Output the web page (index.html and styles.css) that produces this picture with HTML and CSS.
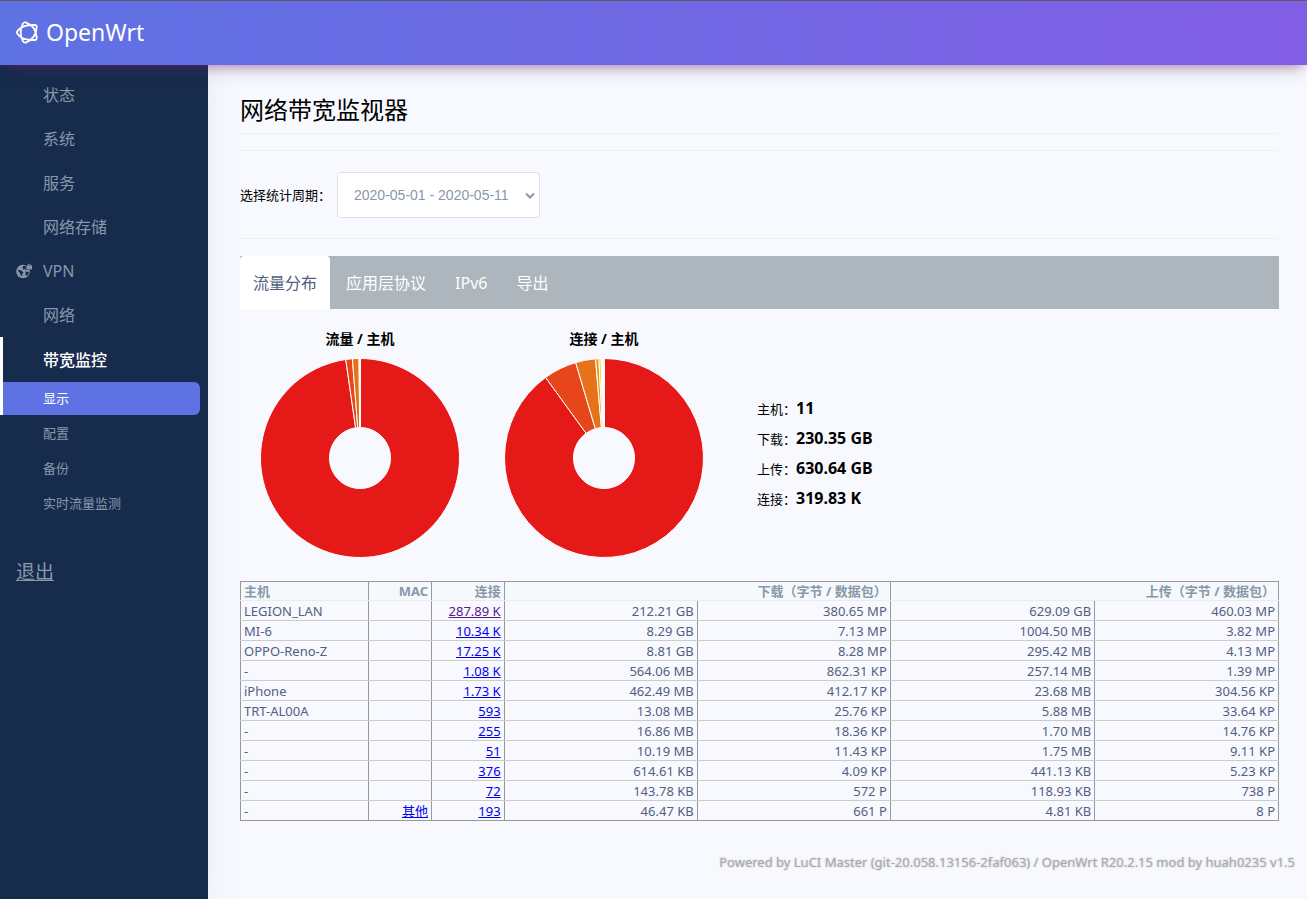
FILE: index.html
```html
<!DOCTYPE html>
<html lang="zh-CN">
<head>
<meta charset="utf-8">
<meta name="viewport" content="width=device-width, initial-scale=1">
<title>OpenWrt - 网络带宽监视器</title>
<link rel="stylesheet" href="styles.css">
</head>
<body>
<header class="topbar">
  <a class="brand" href="#">
    <svg class="brand-logo" viewBox="0 0 24 24" aria-hidden="true">
      <path d="M1.400 10.800Q6.500 3.500 19.500 4.200Q21.800 4.400 21.600 6.600Q20.800 18.400 10.200 22.500Q8.200 23 7.200 21.200Q2.500 12 7.200 2.800Q8.200 1 10.200 1.500Q20.800 5.600 21.600 17.400Q21.800 19.600 19.500 19.800Q6.500 20.500 1.400 13.200Q0.600 12 1.400 10.800Z" fill="none" stroke="#fff" stroke-width="1.900" stroke-linejoin="round"/>
    </svg>
    <span>OpenWrt</span>
  </a>
</header>
<div class="layout">
  <nav class="sidebar">
    <ul class="menu">
      <li><a href="#">状态</a></li>
      <li><a href="#">系统</a></li>
      <li><a href="#">服务</a></li>
      <li><a href="#">网络存储</a></li>
      <li><a class="has-icon" href="#"><svg class="menu-icon" viewBox="0 0 16 16" aria-hidden="true"><circle cx="7" cy="8.500" r="6.800" fill="#8898aa"/><path d="M2.500 6.500L6 8L7.500 9.500L6 11.500L6.300 13.500L4.500 12L4 10L2 8ZM7 3H9.500V6L7.500 6.500L6.500 5ZM9.500 8.500L13 9L12 12L10 13L9.500 11Z" fill="#172b4d"/><path d="M9.500 0H16V7H9.500Z" fill="#172b4d"/><path d="M10.500 2.500H16V6.500H10.500Z" fill="#8898aa"/><path d="M11.800 3V2Q13.200 0 14.700 2V3" fill="none" stroke="#8898aa"/></svg>VPN</a></li>
      <li><a href="#">网络</a></li>
      <li><a class="active" href="#">带宽监控</a>
        <ul class="submenu">
          <li><a class="current" href="#">显示</a></li>
          <li><a href="#">配置</a></li>
          <li><a href="#">备份</a></li>
          <li><a href="#">实时流量监测</a></li>
        </ul>
      </li>
    </ul>
    <a class="logout" href="#">退出</a>
  </nav>
  <main class="main">
    <h2 class="title">网络带宽监视器</h2>
    <form class="period">
      <label for="period">选择统计周期：</label>
      <span class="select-wrap">
        <select id="period"><option>2020-05-01 - 2020-05-11</option></select>
        <svg class="chevron" viewBox="0 0 10 8" aria-hidden="true"><path d="M1 1.500L5 5.500L9 1.500" fill="none" stroke="#8898aa" stroke-width="2"/></svg>
      </span>
    </form>
    <div class="tabs" role="tablist">
      <button class="tab selected" type="button" role="tab" aria-selected="true">流量分布</button>
      <button class="tab" type="button" role="tab">应用层协议</button>
      <button class="tab" type="button" role="tab">IPv6</button>
      <button class="tab" type="button" role="tab">导出</button>
    </div>
    <section class="charts">
      <figure class="chart">
        <figcaption>流量 / 主机</figcaption>
        <svg class="pie" viewBox="0 0 200 200" data-values="841.3,9.27,9.1,0.8,0.48,0.018,0.018,0.012"></svg>
      </figure>
      <figure class="chart">
        <figcaption>连接 / 主机</figcaption>
        <svg class="pie" viewBox="0 0 200 200" data-values="287.89,17.25,10.34,1.73,1.08,0.593,0.376,0.255,0.193,0.072,0.051"></svg>
      </figure>
      <ul class="totals">
        <li>主机：<strong>11</strong></li>
        <li>下载：<strong>230.35 GB</strong></li>
        <li>上传：<strong>630.64 GB</strong></li>
        <li>连接：<strong>319.83 K</strong></li>
      </ul>
    </section>
    <table class="hosts">
      <colgroup><col class="c-host"><col class="c-mac"><col class="c-conn"><col class="c-down"><col class="c-down"><col class="c-up"><col class="c-up-pkts"></colgroup>
      <thead>
        <tr><th>主机</th><th>MAC</th><th>连接</th><th colspan="2">下载（字节 / 数据包）</th><th colspan="2">上传（字节 / 数据包）</th></tr>
      </thead>
      <tbody>
        <tr><td>LEGION_LAN</td><td></td><td><a class="visited" href="#">287.89 K</a></td><td>212.21 GB</td><td>380.65 MP</td><td>629.09 GB</td><td>460.03 MP</td></tr>
        <tr><td>MI-6</td><td></td><td><a href="#">10.34 K</a></td><td>8.29 GB</td><td>7.13 MP</td><td>1004.50 MB</td><td>3.82 MP</td></tr>
        <tr><td>OPPO-Reno-Z</td><td></td><td><a href="#">17.25 K</a></td><td>8.81 GB</td><td>8.28 MP</td><td>295.42 MB</td><td>4.13 MP</td></tr>
        <tr><td>-</td><td></td><td><a href="#">1.08 K</a></td><td>564.06 MB</td><td>862.31 KP</td><td>257.14 MB</td><td>1.39 MP</td></tr>
        <tr><td>iPhone</td><td></td><td><a href="#">1.73 K</a></td><td>462.49 MB</td><td>412.17 KP</td><td>23.68 MB</td><td>304.56 KP</td></tr>
        <tr><td>TRT-AL00A</td><td></td><td><a href="#">593</a></td><td>13.08 MB</td><td>25.76 KP</td><td>5.88 MB</td><td>33.64 KP</td></tr>
        <tr><td>-</td><td></td><td><a href="#">255</a></td><td>16.86 MB</td><td>18.36 KP</td><td>1.70 MB</td><td>14.76 KP</td></tr>
        <tr><td>-</td><td></td><td><a href="#">51</a></td><td>10.19 MB</td><td>11.43 KP</td><td>1.75 MB</td><td>9.11 KP</td></tr>
        <tr><td>-</td><td></td><td><a href="#">376</a></td><td>614.61 KB</td><td>4.09 KP</td><td>441.13 KB</td><td>5.23 KP</td></tr>
        <tr><td>-</td><td></td><td><a href="#">72</a></td><td>143.78 KB</td><td>572 P</td><td>118.93 KB</td><td>738 P</td></tr>
        <tr><td>-</td><td><a href="#">其他</a></td><td><a href="#">193</a></td><td>46.47 KB</td><td>661 P</td><td>4.81 KB</td><td>8 P</td></tr>
      </tbody>
    </table>
    <footer class="footer">Powered by LuCI Master (git-20.058.13156-2faf063) / OpenWrt R20.2.15 mod by huah0235 v1.5</footer>
  </main>
</div>
<script src="pie.js"></script>
</body>
</html>
```
FILE: styles.css
```css
* { box-sizing: border-box; }

body {
  display: flex;
  flex-direction: column;
  min-height: 100vh;
  margin: 0;
  background: #f8f9fe;
  color: #000;
  font-family: "Noto Sans", "Noto Sans CJK SC", sans-serif;
  font-size: 13px;
  line-height: 20px;
}

ul { margin: 0; padding: 0; list-style: none; }

.topbar {
  position: relative;
  z-index: 2;
  display: flex;
  align-items: center;
  height: 65px;
  padding: 0 16px 2px;
  border-top: 1px solid #5c5a66;
  background: linear-gradient(87deg, #5e72e4 0, #825ee4 100%) border-box;
  background-clip: padding-box;
  box-shadow: 0 5px 10px -4px rgba(140, 20, 120, 0.4), 0 8px 20px -6px rgba(60, 60, 90, 0.3);
}

.brand {
  display: flex;
  align-items: center;
  gap: 8px;
  color: #fff;
  font-size: 23px;
  line-height: 32px;
  text-decoration: none;
}

.brand-logo { width: 23px; height: 23px; margin-right: -1px; }

.layout { display: flex; flex: 1; }

.sidebar {
  flex: 0 0 208px;
  padding-top: 8px;
  background: #172b4d;
  box-shadow: 0 0 32px 0 rgba(136, 152, 170, 0.15);
}

.menu a {
  display: flex;
  align-items: center;
  height: 44px;
  padding-left: 43px;
  color: #8898aa;
  font-size: 16px;
  text-decoration: none;
}

.menu .has-icon { gap: 11px; padding-left: 16px; }

.menu-icon { width: 16px; height: 16px; }

.menu .active {
  height: 45px;
  padding-left: 40px;
  border-left: 3px solid #fff;
  color: #fff;
  font-weight: 500;
}

.submenu { display: flex; flex-direction: column; gap: 2px; }

.submenu a { height: 33px; padding-bottom: 2px; font-size: 13px; }

.submenu .current {
  margin-right: 8px;
  padding-left: 40px;
  border-left: 3px solid #fff;
  border-radius: 0 6px 6px 0;
  background: #5e72e4;
  color: #fff;
}

.logout {
  display: inline-block;
  margin: 37px 16px 0;
  color: #8898aa;
  font-size: 19px;
  line-height: 30px;
}

.main { flex: 1; min-width: 0; padding: 27px 28px 0 32px; }

.title {
  margin: 0 0 16px;
  padding-bottom: 5px;
  border-bottom: 1px solid #eef0f3;
  font-size: 24px;
  font-weight: 400;
  line-height: 36px;
}

.period {
  display: flex;
  align-items: center;
  gap: 8px;
  padding: 21px 0 20px;
  border-top: 1px solid #eef0f3;
  border-bottom: 1px solid #eef0f3;
}

.period label { width: 89px; white-space: nowrap; }

.select-wrap { position: relative; }

.period select {
  display: block;
  width: 203px;
  height: 46px;
  padding: 0 16px;
  border: 1px solid #dee2e6;
  border-radius: 4px;
  background: #fff;
  color: #8898aa;
  font: 14px "Liberation Sans", sans-serif;
  appearance: none;
}

.chevron {
  position: absolute;
  top: 20px;
  right: 5px;
  width: 10px;
  height: 8px;
  pointer-events: none;
}

.tabs {
  display: flex;
  gap: 3px;
  margin-top: 17px;
  background: #adb5bd;
}

.tab {
  padding: 1px 13px 0;
  border: 0;
  background: none;
  color: #fff;
  font: 16px/52px "Noto Sans", "Noto Sans CJK SC", sans-serif;
}

.tab.selected {
  border-radius: 4px 4px 0 0;
  background: #fff;
  color: #525f7f;
}

.charts { display: flex; align-items: center; gap: 44px; padding: 20px; }

.chart { display: flex; flex-direction: column; margin: 0; }

.chart figcaption {
  padding-bottom: 9px;
  font-size: 14px;
  font-weight: 700;
  text-align: center;
}

.pie { display: block; width: 200px; height: 200px; }

.totals { padding-left: 9px; padding-top: 18px; }

.totals li { height: 30px; line-height: 30px; }

.totals strong { font-size: 16px; }

.hosts {
  width: 100%;
  margin-top: 3px;
  border: 1px solid #999;
  border-collapse: collapse;
  table-layout: fixed;
  color: #525f7f;
}

.c-host { width: 12.3%; }
.c-mac { width: 6.1%; }
.c-conn { width: 7%; }
.c-down { width: 18.6%; }
.c-up { width: 19.7%; }
.c-up-pkts { width: 17.7%; }

.hosts th,
.hosts td {
  padding: 1px 3px 0;
  border: 1px solid #999;
  border-top-color: #ccc;
  border-bottom-color: #ccc;
  line-height: 18px;
  text-align: right;
  white-space: nowrap;
}

.hosts th {
  padding-top: 0;
  border-top-color: #999;
  border-bottom-color: #e9ecef;
  background: #f6f9fc;
  color: #8898aa;
  font-weight: 700;
}

.hosts tr > :first-child { text-align: left; }

.hosts tbody tr:last-child td { border-bottom-color: #999; }

.hosts a { color: #00e; }
.hosts .visited { color: #551a8b; }

.footer {
  margin: 31px -16px 0 0;
  color: #aaa;
  text-align: right;
  text-shadow: 0 0 2px #bbb;
}
```
FILE: pie.js
```js
const INNER = 30.500;
const OUTER = 99.500;

function point(radius, turn) {
  const a = turn * 2 * Math.PI - Math.PI / 2;
  return (100 + radius * Math.cos(a)).toFixed(3) + " " + (100 + radius * Math.sin(a)).toFixed(3);
}

function sliceColor(index) {
  return "hsl(" + index * 13 + ", 80%, 50%)";
}

document.querySelectorAll(".pie").forEach(function (svg) {
  const values = svg.dataset.values.split(",").map(Number);
  const total = values.reduce(function (sum, v) { return sum + v; }, 0);
  let start = 0;
  values.forEach(function (value, index) {
    const end = start + value / total;
    const large = end - start > 0.5 ? 1 : 0;
    const path = document.createElementNS("http://www.w3.org/2000/svg", "path");
    path.setAttribute("d",
      "M" + point(OUTER, start) +
      "A" + OUTER + " " + OUTER + " 0 " + large + " 1 " + point(OUTER, end) +
      "L" + point(INNER, end) +
      "A" + INNER + " " + INNER + " 0 " + large + " 0 " + point(INNER, start) + "Z");
    path.setAttribute("fill", sliceColor(index));
    path.setAttribute("stroke", "#fff");
    svg.appendChild(path);
    start = end;
  });
});
```
